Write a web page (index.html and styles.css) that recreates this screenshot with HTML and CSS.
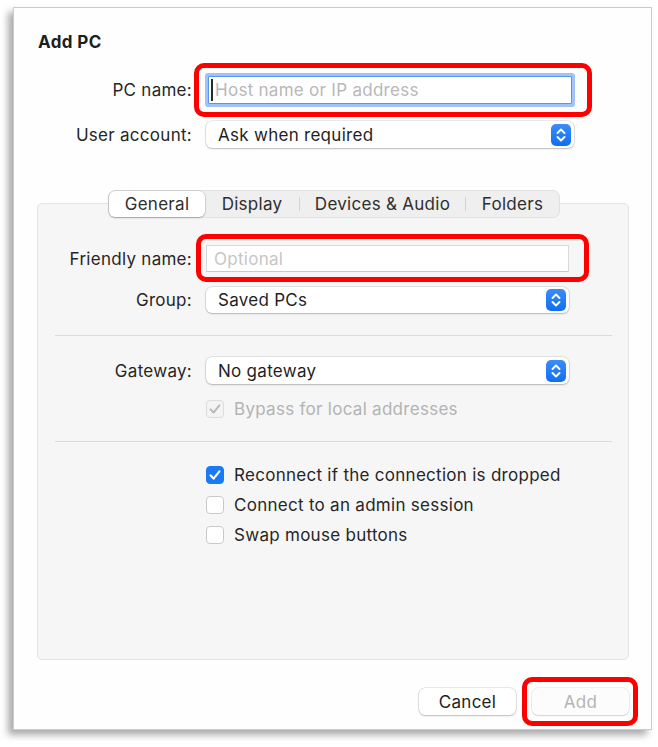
FILE: index.html
```html
<!DOCTYPE html>
<html lang="en">
<head>
<meta charset="utf-8">
<title>Add PC</title>
<link rel="stylesheet" href="styles.css">
</head>
<body>
<div class="window">
  <h1 class="title">Add PC</h1>

  <div class="row top-row row-pc">
    <span class="lbl lbl-top">PC name:</span>
    <div class="field focus mark mark-pc"><span class="caret"></span><span class="ph">Host name or IP address</span></div>
  </div>
  <div class="row top-row row-user">
    <span class="lbl lbl-top">User account:</span>
    <div class="popup popup-top"><span class="val">Ask when required</span>
      <span class="stepper"><svg width="20" height="22" viewBox="0 0 20 22"><path d="M6.5 9 L10 5.5 L13.5 9 M6.5 13 L10 16.5 L13.5 13" fill="none" stroke="#fff" stroke-width="1.9" stroke-linecap="round" stroke-linejoin="round"/></svg></span>
    </div>
  </div>

  <div class="tabview">
    <div class="tabs">
      <span class="tab sel t1">General</span>
      <span class="tab t2">Display</span>
      <span class="tsep"></span>
      <span class="tab t3">Devices &amp; Audio</span>
      <span class="tsep"></span>
      <span class="tab t4">Folders</span>
    </div>
    <div class="box">
      <div class="row box-row row-friendly">
        <span class="lbl lbl-box">Friendly name:</span>
        <div class="field plain mark mark-friendly"><span class="ph ph-light">Optional</span></div>
      </div>
      <div class="row box-row row-group">
        <span class="lbl lbl-box">Group:</span>
        <div class="popup popup-box"><span class="val">Saved PCs</span>
          <span class="stepper"><svg width="20" height="22" viewBox="0 0 20 22"><path d="M6.5 9 L10 5.5 L13.5 9 M6.5 13 L10 16.5 L13.5 13" fill="none" stroke="#fff" stroke-width="1.9" stroke-linecap="round" stroke-linejoin="round"/></svg></span>
        </div>
      </div>
      <div class="sep sep1"></div>
      <div class="row box-row row-gateway">
        <span class="lbl lbl-box">Gateway:</span>
        <div class="popup popup-box popup-gw"><span class="val">No gateway</span>
          <span class="stepper"><svg width="20" height="22" viewBox="0 0 20 22"><path d="M6.5 9 L10 5.5 L13.5 9 M6.5 13 L10 16.5 L13.5 13" fill="none" stroke="#fff" stroke-width="1.9" stroke-linecap="round" stroke-linejoin="round"/></svg></span>
        </div>
      </div>
      <div class="check-row bypass">
        <span class="cb cb-disabled"><svg width="18" height="18" viewBox="0 0 18 18"><path d="M4.6 9.4 L7.6 12.6 L13.4 5.4" fill="none" stroke="#b9b9b9" stroke-width="2" stroke-linecap="round" stroke-linejoin="round"/></svg></span>
        <span class="cl cl-disabled">Bypass for local addresses</span>
      </div>
      <div class="sep sep2"></div>
      <div class="check-row first">
        <span class="cb cb-on"><svg width="18" height="18" viewBox="0 0 18 18"><path d="M4.6 9.4 L7.6 12.6 L13.4 5.4" fill="none" stroke="#fff" stroke-width="2.2" stroke-linecap="round" stroke-linejoin="round"/></svg></span>
        <span class="cl">Reconnect if the connection is dropped</span>
      </div>
      <div class="check-row">
        <span class="cb"></span>
        <span class="cl">Connect to an admin session</span>
      </div>
      <div class="check-row">
        <span class="cb"></span>
        <span class="cl">Swap mouse buttons</span>
      </div>
    </div>
  </div>

  <div class="buttons">
    <button class="btn">Cancel</button>
    <button class="btn btn-disabled mark mark-add">Add</button>
  </div>
</div>
</body>
</html>
```
FILE: styles.css
```css
* { box-sizing: border-box; }

html, body {
  margin: 0;
  padding: 0;
  background: #ffffff;
}

body {
  font-family: "Inter", "Liberation Sans", "DejaVu Sans", sans-serif;
  font-size: 17px;
  letter-spacing: 0.28px;
  color: #262626;
  width: 658px;
  height: 747px;
  overflow: hidden;
}

.window {
  margin: 7px 0 0 13px;
  width: 639px;
  height: 723px;
  background: #fefefe;
  border: 1px solid #cbcbcb;
  box-shadow: -5px 5px 7px rgba(0, 0, 0, 0.33);
  display: flex;
  flex-direction: column;
}

.title {
  margin: 24px 0 0 24px;
  font-size: 17px;
  font-weight: 700;
  letter-spacing: 0.4px;
  line-height: 20px;
  color: #1e1e1e;
}

.row {
  display: flex;
  align-items: center;
}

.lbl {
  text-align: right;
  white-space: nowrap;
  line-height: 20px;
}

.lbl-top { width: 178px; margin-right: 14px; }
.lbl-box { width: 154px; margin-right: 14px; }

.row-pc { margin-top: 24px; height: 28px; }
.row-user { margin-top: 17px; height: 27px; }

/* text fields */
.field {
  background: #ffffff;
  display: flex;
  align-items: center;
  white-space: nowrap;
}

.focus {
  margin-left: 2px;
  width: 364px;
  height: 28px;
  border: 1px solid #5b93ef;
  border-radius: 1px;
  box-shadow: 0 0 0 3px rgba(86, 146, 245, 0.55);
  padding-left: 2px;
}

.caret {
  width: 2px;
  height: 22px;
  background: #2a2a2a;
  margin-right: 2px;
}

.ph { color: #b8b8b8; }
.ph-light { color: #c6c6c6; }

.plain {
  width: 363px;
  height: 27px;
  border: 1px solid #dadada;
  border-bottom-color: #c9c9c9;
  padding-left: 7px;
}

/* popups */
.popup {
  display: flex;
  align-items: center;
  justify-content: space-between;
  background: #ffffff;
  border-radius: 6px;
  box-shadow: 0 0 0 0.5px rgba(0, 0, 0, 0.16), 0 1px 2px rgba(0, 0, 0, 0.2);
  padding: 0 3px 0 12px;
  white-space: nowrap;
}

.popup-top { width: 368px; height: 27px; }
.popup-box { width: 363px; height: 26px; }
.popup-gw { height: 27px; }

.val { color: #1f1f1f; }

.stepper {
  width: 20px;
  height: 22px;
  border-radius: 5px;
  background: linear-gradient(#3b8df8, #0f6ff0);
  display: flex;
}

/* tabs */
.tabview {
  margin: 42px 22px 0 23px;
}

.tabs {
  position: relative;
  z-index: 1;
  display: flex;
  align-items: center;
  width: 452px;
  height: 28px;
  margin: 0 auto;
  background: #efefef;
  border: 1px solid #e1e1e1;
  border-radius: 7px;
  transform: translateX(1px);
}

.tab {
  height: 26px;
  display: flex;
  align-items: center;
  justify-content: center;
  color: #2e2e2e;
  white-space: nowrap;
}

.t1 { width: 96px; }
.t2 { width: 94px; }
.t3 { width: 165px; }
.t4 { width: 93px; }

.sel {
  background: #ffffff;
  border-radius: 6px;
  box-shadow: 0 0 0 0.5px rgba(0, 0, 0, 0.14), 0 1px 2px rgba(0, 0, 0, 0.22);
}

.tsep {
  width: 1px;
  height: 14px;
  background: #d3d3d3;
}

.box {
  margin-top: -15px;
  height: 457px;
  background: #f6f6f6;
  border: 1px solid #e4e4e4;
  border-radius: 5px;
  display: flex;
  flex-direction: column;
}

.row-friendly { margin-top: 41px; height: 27px; }
.row-group { margin-top: 15px; height: 26px; }
.row-gateway { margin-top: 21px; height: 27px; }

.sep {
  height: 1px;
  background: #dbdbdb;
  margin: 0 16px 0 17px;
}
.sep1 { margin-top: 22px; }
.sep2 { margin-top: 22px; }

.check-row {
  display: flex;
  align-items: center;
  height: 20px;
  margin-left: 168px;
  margin-top: 10px;
}
.check-row.bypass { margin-top: 15px; }
.check-row.first { margin-top: 23px; }

.cb {
  width: 18px;
  height: 18px;
  border-radius: 4px;
  background: #ffffff;
  border: 1px solid #c9c9c9;
  margin-right: 10px;
  display: flex;
  flex-shrink: 0;
}

.cb svg { margin: -1px; }

.cb-on {
  background: #1a79f5;
  border-color: #1a79f5;
}

.cb-disabled {
  background: #f4f4f4;
  border-color: #dddddd;
}

.cl { white-space: nowrap; color: #262626; line-height: 20px; }
.cl-disabled { color: #b3b3b3; }

/* buttons */
.buttons {
  display: flex;
  justify-content: flex-end;
  gap: 16px;
  margin-top: 28px;
  padding-right: 22px;
}

.btn {
  width: 97px;
  height: 27px;
  font-family: inherit;
  font-size: 17px;
  letter-spacing: 0.28px;
  color: #222222;
  background: #ffffff;
  border: none;
  border-radius: 6px;
  box-shadow: 0 0 0 0.5px rgba(0, 0, 0, 0.16), 0 1px 2px rgba(0, 0, 0, 0.2);
  padding: 0;
}

.btn-disabled {
  color: #b4b4b4;
  background: #fcfcfc;
  box-shadow: 0 0 0 0.5px rgba(0, 0, 0, 0.1), 0 1px 1.5px rgba(0, 0, 0, 0.12);
}

/* red annotation outlines drawn over the screenshot */
.mark { position: relative; }

.mark::after {
  content: "";
  position: absolute;
  border: 5px solid #ff0000;
  border-radius: 10px;
  pointer-events: none;
}

.mark-pc::after { top: -14px; bottom: -14px; left: -15px; right: -21px; }
.mark-friendly::after { top: -12px; bottom: -11px; left: -11px; right: -21px; }
.mark-add::after { top: -11px; bottom: -11px; left: -10px; right: -9px; }
```
